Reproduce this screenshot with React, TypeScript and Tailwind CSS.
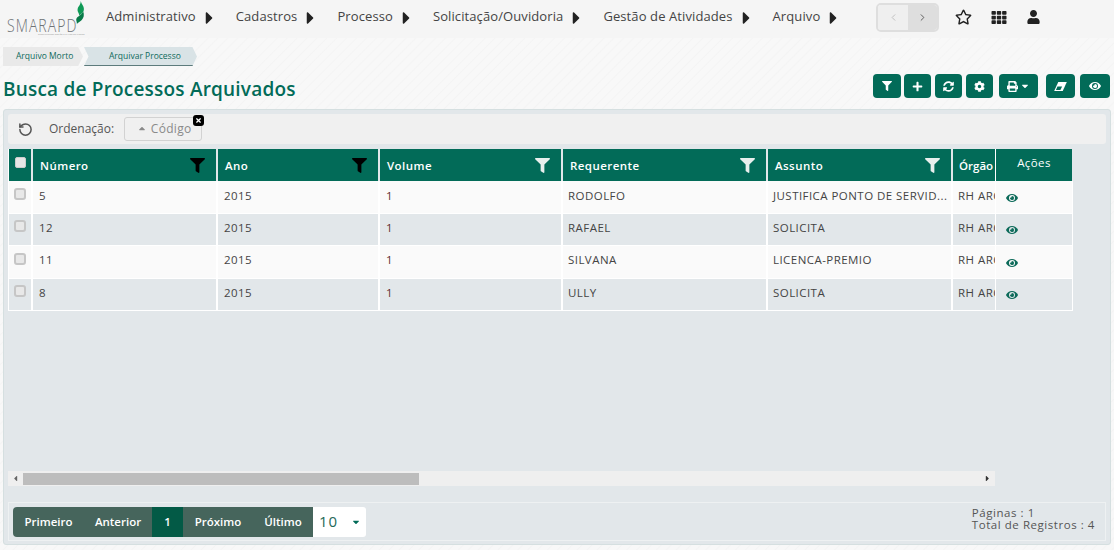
import React from 'react';
import {
  FaCaretDown,
  FaCaretLeft,
  FaCaretRight,
  FaCog,
  FaEye,
  FaFilter,
  FaPlus,
  FaPrint,
  FaRegStar,
  FaSyncAlt,
  FaTh,
  FaTimes,
  FaUser,
} from 'react-icons/fa';
import { ChevronLeft, ChevronRight, RotateCcw } from 'lucide-react';

const menu = ['Administrativo', 'Cadastros', 'Processo', 'Solicitação/Ouvidoria', 'Gestão de Atividades', 'Arquivo'];

const rows = [
  { numero: '5', requerente: 'RODOLFO', assunto: 'JUSTIFICA PONTO DE SERVID...' },
  { numero: '12', requerente: 'RAFAEL', assunto: 'SOLICITA' },
  { numero: '11', requerente: 'SILVANA', assunto: 'LICENCA-PREMIO' },
  { numero: '8', requerente: 'ULLY', assunto: 'SOLICITA' },
];

const gridCols = 'grid grid-cols-[22px_183px_160px_181px_203px_183px_42px_77px] gap-x-[2px] border-l border-white';

const Logo = () => (
  <div className="relative w-[100px] h-[38px] shrink-0">
    <span className="absolute left-[7px] top-[14px] origin-left scale-x-[0.74] text-[19px] leading-[22px] tracking-[1.4px] text-[#6f7376] font-light">
      SMARAPD
    </span>
    <svg viewBox="0 0 14 30" className="absolute left-[74px] top-[1px] w-[12px] h-[23px]">
      <path d="M8 0c1 5 5 7 4 12-.6 3-4 5-6 7 0-4-3-5-2-9 .6-3 4-5 4-10z" fill="#0f9a56" />
      <path d="M11 13c2 5 1 9-2 12-2 2-5 3-6 5 0-4-2-5 0-8 2-3 7-4 8-9z" fill="#087a48" />
    </svg>
    <span className="absolute left-[38px] top-[33px] text-[2.5px] leading-[3px] text-[#999] whitespace-nowrap">
      Simplificando Gestão e a Vida na Cidade
    </span>
  </div>
);

const ActionButton = ({ children, className = '' }: { children: React.ReactNode; className?: string }) => (
  <button className={`h-[24px] flex items-center justify-center gap-[2px] bg-[#026b58] rounded-[4px] text-white text-[11px] ${className}`}>
    {children}
  </button>
);

const HeaderCell = ({ label, filterClass }: { label: string; filterClass: string }) => (
  <div className="h-[32px] bg-[#026b58] flex items-center justify-between pl-[7px] pr-[11px] text-white text-[11.5px] font-semibold">
    <span className="mt-[2px]">{label}</span>
    <FaFilter className={`w-[15px] h-[15px] ${filterClass}`} />
  </div>
);

export default function App() {
  return (
    <div className="w-[1114px] h-[550px] overflow-hidden font-['Open_Sans',sans-serif] bg-[#f7f7f7] bg-[repeating-linear-gradient(135deg,#f8f8f8_0px,#f8f8f8_5px,#f4f4f4_6px,#f8f8f8_7px)] text-[#444]">
      <header className="h-[38px] bg-[#f5f5f5] flex items-start">
        <Logo />
        <nav className="flex items-center h-[34px] ml-[6px] w-[770px] text-[13px] tracking-[0.1px] text-[#444] gap-[21px]">
          {menu.map((item) => (
            <span key={item} className="flex items-center gap-[8px] whitespace-nowrap">
              {item}
              <FaCaretRight className="w-[11px] h-[20px] text-[#222] mt-[2px]" />
            </span>
          ))}
        </nav>
        <div className="flex h-[29px] w-[63px] mt-[3px] border-2 border-[#dedede] rounded-[5px] overflow-hidden">
          <span className="w-[30px] bg-[#efefef] flex items-center justify-center text-[#bbb]">
            <ChevronLeft size={11} />
          </span>
          <span className="flex-1 bg-[#dedede] flex items-center justify-center text-[#555]">
            <ChevronRight size={11} />
          </span>
        </div>
        <div className="flex items-center h-[34px] ml-[16px] gap-[19px] text-[#222]">
          <FaRegStar className="w-[17px] h-[16px]" />
          <FaTh className="w-[16px] h-[15px]" />
          <FaUser className="w-[13px] h-[14px] ml-[1px]" />
        </div>
      </header>

      <div className="flex pl-[3px] pt-[9px] h-[31px] text-[8.5px] text-[#0f6a5c]">
        <span className="w-[80px] h-[19px] bg-[#e9e9e9] flex items-center pl-[13px] [clip-path:polygon(0_0,94%_0,100%_50%,94%_100%,0_100%)]">
          Arquivo Morto
        </span>
        <span className="w-[113px] h-[19px] ml-[1px] bg-[#d9e3e6] border-b-[1px] border-[#5d7b7c] flex items-center pl-[25px] [clip-path:polygon(0_0,96%_0,100%_50%,96%_100%,0_100%,4%_50%)]">
          Arquivar Processo
        </span>
      </div>

      <div className="flex items-center justify-between h-[40px] pl-[3px] pr-[4px]">
        <h1 className="text-[19px] leading-[26px] font-semibold text-[#026b58] tracking-[0.2px]">
          Busca de Processos Arquivados
        </h1>
        <div className="flex items-center mt-[-6px]">
          <ActionButton className="w-[28px]"><FaFilter size={10} /></ActionButton>
          <ActionButton className="w-[27px] ml-[3px]"><FaPlus size={11} /></ActionButton>
          <ActionButton className="w-[27px] ml-[4px]"><FaSyncAlt size={11} /></ActionButton>
          <ActionButton className="w-[27px] ml-[4px]"><FaCog size={11} /></ActionButton>
          <ActionButton className="w-[39px] ml-[6px]"><FaPrint size={11} /><FaCaretDown size={10} /></ActionButton>
          <ActionButton className="w-[29px] ml-[8px]">
            <svg viewBox="0 0 14 10" className="w-[13px] h-[9px]">
              <path d="M4.5 0H14L9.5 10H0z" fill="#fff" />
              <path d="M3.6 5h5.2L6.9 8.8H1.9z" fill="#026b58" />
            </svg>
          </ActionButton>
          <ActionButton className="w-[30px] ml-[5px]"><FaEye size={12} /></ActionButton>
        </div>
      </div>

      <main className="mx-[3px] h-[436px] bg-[#e2e7ea] border border-[#d5dfe0] rounded-[3px] px-[4px] pt-[4px] flex flex-col">
        <div className="h-[30px] bg-[#f0f0f0] rounded-[3px] flex items-center pl-[10px] text-[12px] text-[#555] shrink-0">
          <RotateCcw size={15} strokeWidth={2.4} className="text-[#555]" />
          <span className="ml-[16px]">Ordenação:</span>
          <span className="relative ml-[10px] w-[78px] h-[24px] border border-[#d2d2d2] rounded-[3px] flex items-center justify-center gap-[4px] pl-[2px] text-[#8a8a8a] tracking-[0.3px]">
            <FaCaretDown size={10} className="rotate-180" />
            Código
            <span className="absolute -top-[3px] -right-[3px] w-[11px] h-[11px] rounded-[3px] bg-black flex items-center justify-center">
              <FaTimes size={7} className="text-white" />
            </span>
          </span>
        </div>

        <div className="w-[1065px] mt-[5px] h-[322px] shrink-0 overflow-hidden text-[11.5px] tracking-[0.45px] text-[#444]">
          <div className={gridCols}>
            <div className="h-[32px] bg-[#026b58] flex items-start justify-center pt-[8px]">
              <span className="w-[11px] h-[11px] rounded-[2px] bg-[#e6e6e6] border border-[#ccc]" />
            </div>
            <HeaderCell label="Número" filterClass="text-black" />
            <HeaderCell label="Ano" filterClass="text-black" />
            <HeaderCell label="Volume" filterClass="text-[#e8efed]" />
            <HeaderCell label="Requerente" filterClass="text-[#e8efed]" />
            <HeaderCell label="Assunto" filterClass="text-[#e8efed]" />
            <div className="h-[32px] bg-[#026b58] flex items-center pl-[6px] text-white text-[11.5px] font-semibold tracking-normal overflow-hidden whitespace-nowrap">
              <span className="mt-[2px]">Órgão</span>
            </div>
            <div className="h-[32px] -ml-[2px] w-[77px] border-l border-white bg-[#026b58] flex justify-center pt-[5px] text-white text-[11.5px] tracking-[0.4px]">
              Ações
            </div>
          </div>
          {rows.map((row, i) => {
            const cell = i % 2 === 0 ? 'bg-[#fafafa]' : 'bg-[#e2e7ea]';
            const pad = i === 0 ? 'pb-[2px]' : 'pb-[4px]';
            return (
              <div key={row.numero} className={`${gridCols} bg-white pb-[1px] ${i % 2 === 0 ? 'h-[33px]' : 'h-[32px]'}`}>
                <div className={`flex justify-center ${cell} ${i % 2 === 0 ? 'pt-[7px]' : 'pt-[6px]'}`}>
                  <span className="w-[12px] h-[12px] rounded-[3px] bg-[#e8e8e8] border-2 border-[#c6c6c6]" />
                </div>
                <div className={`flex items-center pl-[6px] ${pad} ${cell}`}>{row.numero}</div>
                <div className={`flex items-center pl-[6px] ${pad} ${cell}`}>2015</div>
                <div className={`flex items-center pl-[6px] ${pad} text-[#5f2f2f] ${cell}`}>1</div>
                <div className={`flex items-center pl-[5px] ${pad} ${cell}`}>{row.requerente}</div>
                <div className={`flex items-center pl-[5px] ${pad} whitespace-nowrap ${cell}`}>{row.assunto}</div>
                <div className={`flex items-center pl-[5px] ${pad} whitespace-nowrap overflow-hidden ${cell}`}>RH ARQUIVO</div>
                <div className={`-ml-[2px] w-[77px] border-l border-white flex items-center pl-[10px] text-[#0d6b5a] ${cell}`}>
                  <FaEye size={12} className="mt-[1px]" />
                </div>
              </div>
            );
          })}
        </div>

        <div className="w-[987px] h-[15px] bg-[#efefef] flex items-center shrink-0 text-[#666]">
          <FaCaretLeft size={9} className="ml-[3px] w-[9px]" />
          <span className="ml-[3px] w-[396px] h-[12px] bg-[#bdbdbd]" />
          <FaCaretRight size={9} className="ml-auto mr-[3px] text-[#333]" />
        </div>

        <div className="mt-[16px] h-[39px] border border-[#eef1f2] flex items-center justify-between pl-[4px] pr-[10px] shrink-0">
          <div className="flex items-center h-[30px]">
            <div className="flex h-full bg-[#46655c] rounded-l-[4px] overflow-hidden text-white text-[11.5px] font-semibold">
              <span className="w-[71px] flex items-center justify-center">Primeiro</span>
              <span className="w-[68px] flex items-center justify-center">Anterior</span>
              <span className="w-[31px] bg-[#035a46] flex items-center justify-center">1</span>
              <span className="w-[70px] flex items-center justify-center">Próximo</span>
              <span className="w-[60px] flex items-center justify-center">Último</span>
            </div>
            <div className="w-[53px] h-full bg-white rounded-r-[3px] flex items-center justify-between pl-[6px] pr-[5px] text-[#1f6a58] text-[15px] tracking-[0.8px]">
              10
              <FaCaretDown size={10} className="text-[#026b58]" />
            </div>
          </div>
          <div className="mb-[6px] text-[11.5px] leading-[12px] tracking-[0.55px] text-[#555]">
            <div>Páginas : 1</div>
            <div>Total de Registros : 4</div>
          </div>
        </div>
      </main>
    </div>
  );
}
